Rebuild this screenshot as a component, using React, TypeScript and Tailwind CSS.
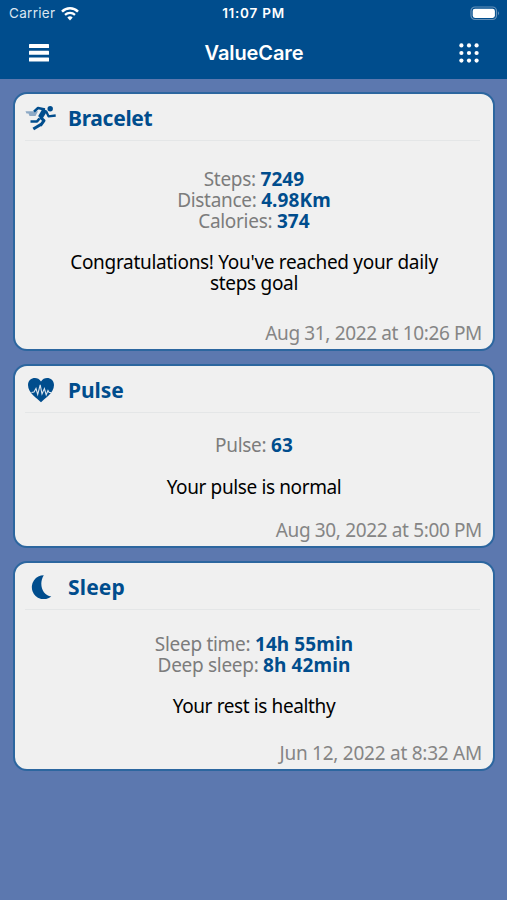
import type { ReactNode } from "react";

function StatusBar() {
  return (
    <div className="flex h-[27px] items-center justify-between pl-[9px] pr-[6px] font-['Inter',sans-serif] text-white">
      <div className="flex w-[100px] items-center gap-[6px]">
        <span className="text-[13.5px] leading-[27px] tracking-[0.3px] text-[#dbe6f0]">Carrier</span>
        <svg width="18" height="14" viewBox="0 0 18 14" fill="none" stroke="white">
          <path d="M1 4.6C5.5.2 12.5.2 17 4.6" strokeWidth="2.5" />
          <path d="M4 7.9C6.9 5.1 11.1 5.1 14 7.9" strokeWidth="2.2" />
          <path d="M9 13.4 6.3 10.5Q9 8.2 11.7 10.5Z" fill="white" stroke="none" />
        </svg>
      </div>
      <span className="text-[13.5px] font-semibold leading-[27px] tracking-[0.75px]">11:07 PM</span>
      <div className="flex w-[103px] justify-end">
        <svg width="31" height="15" viewBox="0 0 31 15">
          <rect x="1" y="1" width="25.5" height="12.5" rx="4" fill="none" stroke="#6591b9" strokeWidth="1.2" />
          <rect x="2.7" y="2.7" width="22.2" height="9.2" rx="2.3" fill="white" />
          <path d="M28 5.2Q30 7.2 28 9.3Z" fill="#6591b9" />
        </svg>
      </div>
    </div>
  );
}

function Header() {
  return (
    <header className="h-[79px] bg-[#004d8d]">
      <StatusBar />
      <div className="flex h-[51px] items-center justify-between pl-[29px] pr-[28px]">
        <svg width="20" height="18" viewBox="0 0 20 18" fill="white">
          <rect width="20" height="4" y="0" rx=".5" />
          <rect width="20" height="4" y="6.8" rx=".5" />
          <rect width="20" height="4" y="13.6" rx=".5" />
        </svg>
        <h1 className="font-['Inter',sans-serif] text-[20px] font-semibold tracking-[-0.1px] text-white">ValueCare</h1>
        <svg width="20" height="20" viewBox="0 0 20 20" fill="white">
          {[2.4, 10, 17.6].map((y) => [2.4, 10, 17.6].map((x) => <circle key={`${x}-${y}`} cx={x} cy={y} r="2.1" />))}
        </svg>
      </div>
    </header>
  );
}

function RunnerIcon() {
  return (
    <svg width="32" height="26" viewBox="0 0 32 26" fill="none" stroke="#004d8d" strokeLinejoin="round">
      <path d="M0.5 6.2H13L10.5 11H4.5L3.5 8.4H1.5Z" fill="#8da9c5" stroke="none" />
      <circle cx="25.2" cy="3.8" r="2.7" fill="#004d8d" stroke="none" />
      <path d="M9 6.7 13 3 20 4.4" strokeWidth="2.5" />
      <path d="M20 4.6 15.3 12.5" strokeWidth="5.2" />
      <path d="M21 6 23.5 11.3 30.7 10.5" strokeWidth="2.3" />
      <path d="M15 12 19 15.6 15.4 20.6" strokeWidth="3" />
      <path d="M14.5 13.5 12 16.5H5.5" strokeWidth="2.7" />
      <path d="M16.2 19.2 8.3 24" strokeWidth="3" />
    </svg>
  );
}

function HeartIcon() {
  return (
    <svg width="28" height="26" viewBox="0 0 28 26">
      <path d="M14 25.3C11 21.8 1 16.5 1 8C1 .5 10.5-1.5 14 4.5C17.5-1.5 27 .5 27 8C27 16.5 17 21.8 14 25.3Z" fill="#004d8d" />
      <path d="M4.5 15.5 7 15 9 11.5 10.7 17.5 13.2 7.8 15 17 17.4 11.5 19.2 17.8 21 13.5 22.2 15.5H24" fill="none" stroke="#dce6ef" strokeWidth="1.1" />
    </svg>
  );
}

function MoonIcon() {
  return (
    <svg width="21" height="24" viewBox="0 0 20 24">
      <path d="M12.3.2A12 12 0 1 0 19.8 21.6C10.5 20.6 7 8.6 12.3.2Z" fill="#004d8d" />
    </svg>
  );
}

interface CardProps {
  title: string;
  icon: ReactNode;
  date: string;
  titleClass: string;
  dateClass: string;
  className: string;
  bodyClass: string;
  children: ReactNode;
}

function Card({ title, icon, date, titleClass, dateClass, className, bodyClass, children }: CardProps) {
  return (
    <section className={`flex flex-col rounded-[14px] border-2 border-[#2c669f] bg-[#f0f0f0] px-[10px] ${className}`}>
      <div className="mr-[3px] flex h-[47px] shrink-0 items-center border-b border-[#e4e6e7] pt-[2px]">
        <div className="flex w-[32px] justify-center">{icon}</div>
        <h2 className={`ml-[11px] text-[21px] font-bold leading-[30px] text-[#004d8d] ${titleClass}`}>{title}</h2>
      </div>
      <div className={`text-center text-[19px] leading-[20.75px] text-[#7c7c7c] ${bodyClass}`}>{children}</div>
      <p className={`mt-auto pb-[5px] pr-px text-right text-[19px] leading-[21px] text-[#858585] ${dateClass}`}>{date}</p>
    </section>
  );
}

function Metric({ label, value }: { label: string; value: string }) {
  return (
    <p className="tracking-[-0.3px]">
      {label}: <b className="font-bold tracking-[0.1px] text-[#004d8d]">{value}</b>
    </p>
  );
}

export default function App() {
  return (
    <div className="h-[900px] w-[507px] overflow-hidden bg-[#5c78af] font-['Noto_Sans',sans-serif]">
      <Header />
      <main className="flex flex-col gap-[13px] pl-[13px] pr-[12px] pt-[13px]">
        <Card title="Bracelet" icon={<RunnerIcon />} date="Aug 31, 2022 at 10:26 PM" titleClass="tracking-[-0.3px]" dateClass="tracking-[-0.36px]" className="h-[259px]" bodyClass="pt-[28px]">
          <Metric label="Steps" value="7249" />
          <Metric label="Distance" value="4.98Km" />
          <Metric label="Calories" value="374" />
          <p className="mx-auto mt-[20.75px] w-[400px] tracking-[-0.31px] text-black">
            Congratulations! You've reached your daily
            <br />
            steps goal
          </p>
        </Card>
        <Card title="Pulse" icon={<HeartIcon />} date="Aug 30, 2022 at 5:00 PM" titleClass="tracking-[-0.05px]" dateClass="tracking-[-0.36px]" className="h-[184px]" bodyClass="pt-[22px]">
          <Metric label="Pulse" value="63" />
          <p className="mt-[20.75px] tracking-[-0.38px] text-black">Your pulse is normal</p>
        </Card>
        <Card title="Sleep" icon={<MoonIcon />} date="Jun 12, 2022 at 8:32 AM" titleClass="tracking-[0.15px]" dateClass="tracking-[-0.25px]" className="h-[210px]" bodyClass="pt-[24px]">
          <Metric label="Sleep time" value="14h 55min" />
          <Metric label="Deep sleep" value="8h 42min" />
          <p className="mt-[20.75px] tracking-[-0.38px] text-black">Your rest is healthy</p>
        </Card>
      </main>
    </div>
  );
}
